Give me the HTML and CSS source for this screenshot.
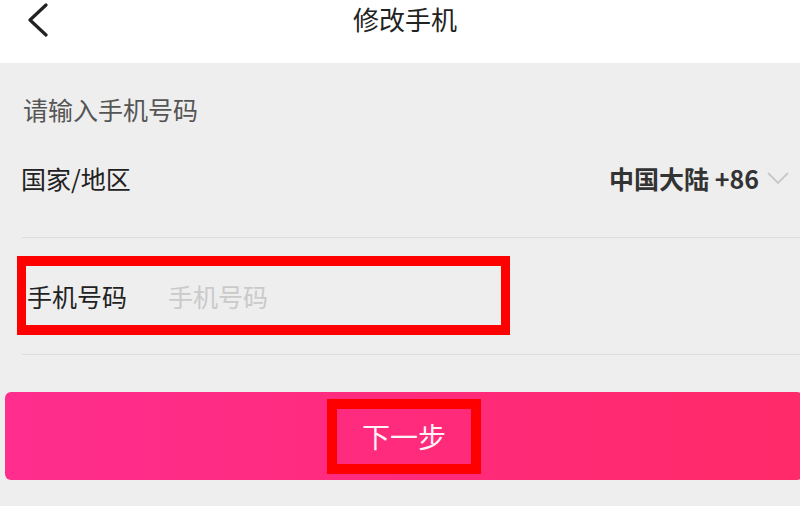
FILE: index.html
```html
<!DOCTYPE html>
<html lang="zh-CN">
<head>
    <meta charset="UTF-8">
    <meta name="viewport" content="width=device-width, initial-scale=1.0">
    <title>修改手机</title>
    <link rel="stylesheet" href="styles.css">
</head>
<body>
    <div class="header">
        <svg class="back" width="24" height="34" viewBox="0 0 24 34">
            <polyline points="20,2 4,17 20,32" fill="none" stroke="#222" stroke-width="3.2" stroke-linecap="round" stroke-linejoin="round"/>
        </svg>
        <div class="title">修改手机</div>
    </div>
    <div class="main">
        <div class="hint">请输入手机号码</div>
        <div class="country">
            <span>国家/地区</span>
            <span class="region">
                <b>中国大陆 +86</b>
                <svg width="22" height="14" viewBox="0 0 22 14">
                    <polyline points="1,2 11,12 21,2" fill="none" stroke="#c8c8c8" stroke-width="1.8"/>
                </svg>
            </span>
        </div>
        <div class="line"></div>
        <div class="phone">
            <span class="label">手机号码</span>
            <input type="text" placeholder="手机号码">
        </div>
        <div class="line line-bottom"></div>
        <button class="next"><span class="next-label">下一步</span></button>
    </div>
</body>
</html>
```

FILE: styles.css
```css
body {
    margin: 0;
    font-family: "Noto Sans CJK SC", "Noto Sans", sans-serif;
    background: #eeeeee;
    color: #222;
    overflow: hidden;
}
.header {
    height: 63px;
    background: #fff;
    display: flex;
    align-items: flex-start;
}
.back {
    margin: 3px 0 0 26px;
}
.title {
    flex: 1;
    text-align: center;
    padding-right: 40px;
    font-size: 26px;
    line-height: 37px;
}
.hint {
    padding: 31px 0 0 23px;
    font-size: 25px;
    line-height: 30px;
    color: #555;
}
.country {
    display: flex;
    justify-content: space-between;
    align-items: center;
    padding: 39px 11px 0 21px;
    font-size: 25px;
    line-height: 30px;
}
.region {
    display: flex;
    align-items: center;
    color: #333;
}
.region svg {
    margin-left: 8px;
}
.line {
    margin: 44px 0 0 22px;
    height: 1px;
    background: #dedede;
}
.line-bottom {
    margin-top: 19px;
}
.phone {
    display: flex;
    align-items: center;
    box-sizing: border-box;
    width: 493px;
    height: 79px;
    margin: 18px 0 0 17px;
    border: solid #ff0000;
    border-width: 10px 9px;
    font-size: 25px;
}
.label {
    width: 141px;
    padding-left: 1px;
    color: #222;
}
.phone input {
    flex: 1;
    border: none;
    background: transparent;
    font: inherit;
    padding: 0;
    outline: none;
}
.phone input::placeholder {
    color: #cacaca;
}
.next {
    display: flex;
    justify-content: center;
    align-items: center;
    width: 798px;
    height: 88px;
    margin: 37px 0 0 5px;
    padding: 0;
    border: none;
    border-radius: 6px;
    background: linear-gradient(90deg, #ff2d8e, #ff2a78 60%, #ff2a68);
    font-family: inherit;
}
.next-label {
    display: flex;
    justify-content: center;
    align-items: center;
    box-sizing: border-box;
    width: 154px;
    height: 75px;
    border: 10px solid #ff0000;
    font-size: 28px;
    color: #fff3f8;
}
```
